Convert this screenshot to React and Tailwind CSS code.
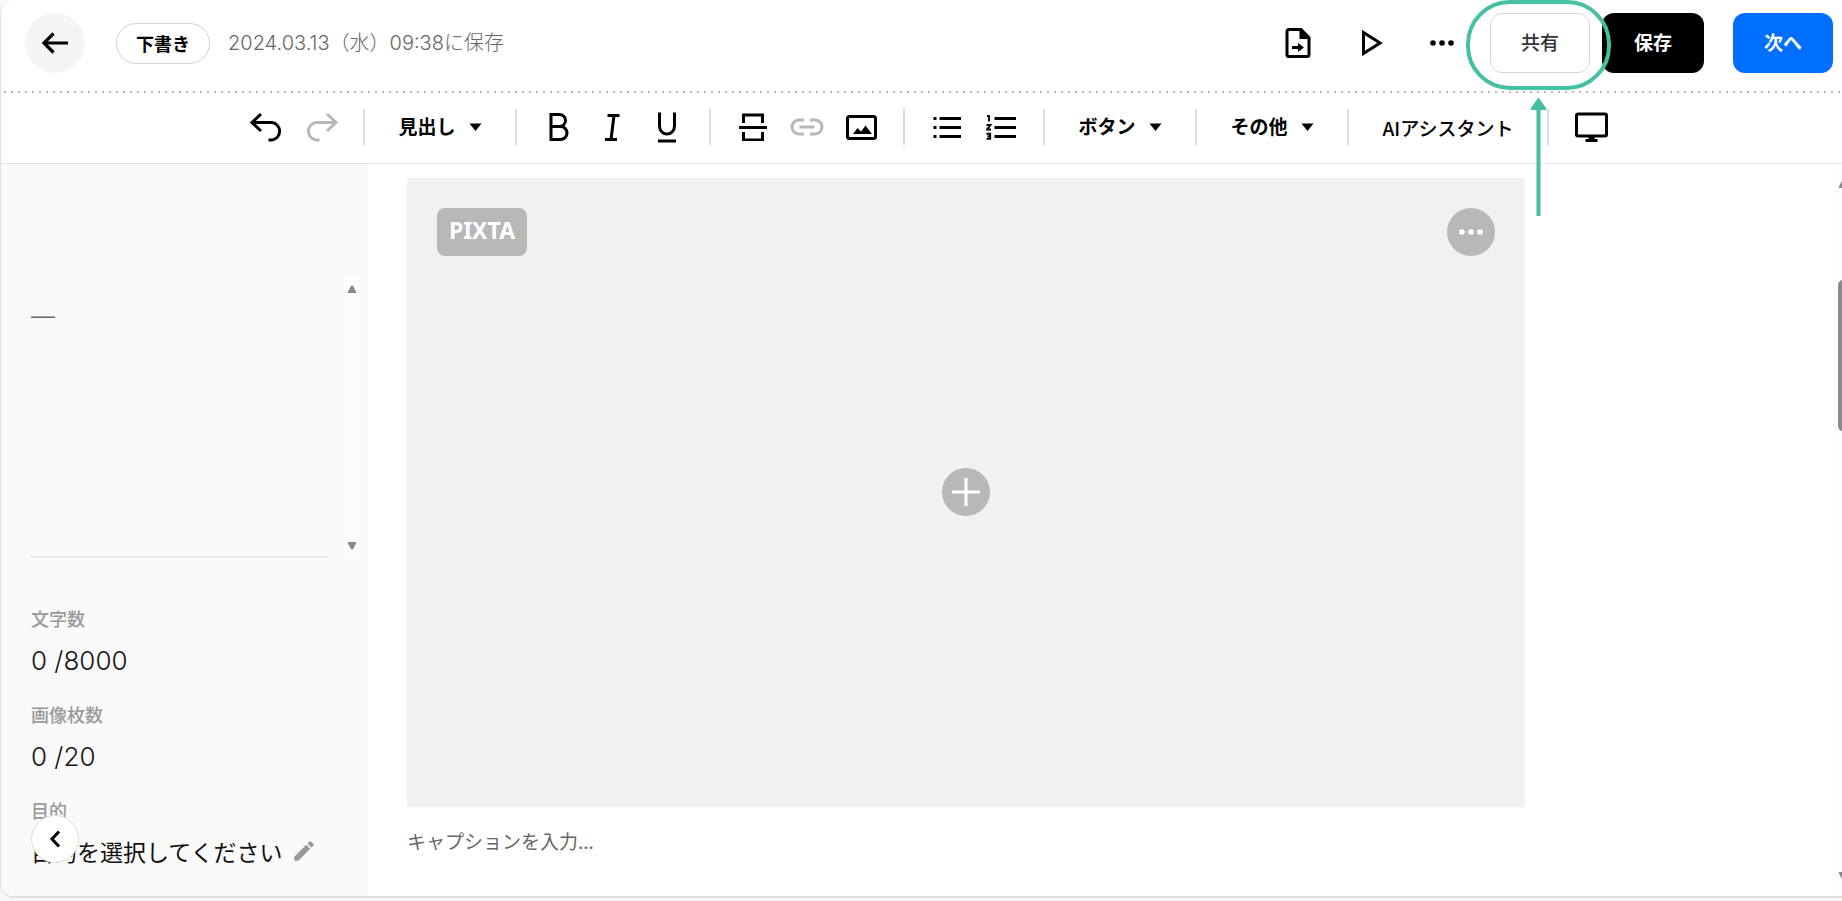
import React from 'react'
import { MdEdit } from 'react-icons/md'

const Icon = ({ w, h, className = '', children }) => (
  <svg
    width={w}
    height={h}
    viewBox={`0 0 ${w} ${h}`}
    fill="none"
    stroke="currentColor"
    strokeWidth="3"
    className={`shrink-0 ${className}`}
    aria-hidden="true"
  >
    {children}
  </svg>
)

const BackIcon = () => (
  <Icon w={28} h={22}>
    <path d="M27 11H3M12.5 1.5L3 11l9.5 9.5" strokeWidth="3.2" />
  </Icon>
)

const UndoIcon = ({ className }) => (
  <Icon w={34} h={30} className={className}>
    <path d="M11 2L2 10.500l9 8.500M2 10.500h20a8.500 8.800 0 0 1 0 17.500h-3.500" />
  </Icon>
)

const BoldIcon = () => (
  <Icon w={20} h={30}>
    <path d="M2 2.500h8.500a5.700 5.700 0 0 1 0 12H2zM2 14.500h9.500a6.300 6.300 0 0 1 0 13H2z" />
  </Icon>
)

const ItalicIcon = () => (
  <Icon w={18} h={30}>
    <path d="M3.500 3.500h12M1 27.500h12M10 3.500L7 27.500" />
  </Icon>
)

const UnderlineIcon = () => (
  <Icon w={20} h={32}>
    <path d="M2.500 1.500v13.500a7.500 8 0 0 0 15 0V1.500M1 30h18" />
  </Icon>
)

const SeparatorIcon = () => (
  <Icon w={28} h={28}>
    <path d="M4.500 10V2h19v8M0 14.500h28M4.500 19v8h19v-8" />
  </Icon>
)

const LinkIcon = () => (
  <Icon w={34} h={18} className="text-[#b8b8b8]">
    <path d="M14 2H9a7 7 0 0 0 0 14h5M20 2h5a7 7 0 0 1 0 14h-5M9.500 9h15" />
  </Icon>
)

const ImageIcon = () => (
  <Icon w={32} h={28}>
    <rect x="2.500" y="3.500" width="28" height="22" rx="2" />
    <path d="M8 21l4.500-6 3.500 3.500 4.500-6L27 21z" fill="currentColor" stroke="none" />
  </Icon>
)

const BulletListIcon = () => (
  <Icon w={28} h={24}>
    <path d="M6.500 3.500H28M6.500 12.500H28M6.500 21.500H28" />
    <path d="M0.500 3.500h3M0.500 12.500h3M0.500 21.500h3" />
  </Icon>
)

const NumberListIcon = () => (
  <Icon w={30} h={26}>
    <path d="M8.500 4.500H30M8.500 13.500H30M8.500 22.500H30" />
    <path
      d="M1 2h2v5.500M0.500 11h4l-3.500 4.500h4M0.500 19.800h3.700v5H0.500M1.500 22.300h2.500"
      strokeWidth="1.900"
    />
  </Icon>
)

const MonitorIcon = () => (
  <Icon w={34} h={30}>
    <rect x="2.500" y="2" width="30" height="22" rx="1.500" />
    <path d="M17.500 24v4" strokeWidth="6" />
    <path d="M11.500 28.500h12" />
  </Icon>
)

const FileIcon = () => (
  <Icon w={26} h={30}>
    <path d="M2 3.500a2 2 0 0 1 2-2h12l8 8v17a2 2 0 0 1-2 2H4a2 2 0 0 1-2-2z" />
    <path d="M14.500 1v10H25z" fill="currentColor" stroke="none" />
    <path d="M7 19.500h8" />
    <path d="M13 15l6 4.500-6 4.500z" fill="currentColor" stroke="none" />
  </Icon>
)

const PlayIcon = () => (
  <Icon w={22} h={28}>
    <path d="M2.500 3.500v21L19 14z" />
  </Icon>
)

const DotsIcon = () => (
  <Icon w={26} h={8}>
    <g fill="currentColor" stroke="none">
      <circle cx="4" cy="4" r="2.800" />
      <circle cx="13" cy="4" r="2.800" />
      <circle cx="22" cy="4" r="2.800" />
    </g>
  </Icon>
)

const Triangle = ({ down, className }) => (
  <svg width="10" height="8" viewBox="0 0 10 8" className={`shrink-0 ${className}`} aria-hidden="true">
    <path
      d={down ? 'M1 0.500h8L5.600 7h-1.200z' : 'M1 7.500h8L5.600 1h-1.200z'}
      fill="currentColor"
      stroke="currentColor"
      strokeLinejoin="round"
    />
  </svg>
)

const Divider = () => <div className="h-9 w-0.5 shrink-0 bg-[#dcdcdc]" />

const ToolGroup = ({ items }) => (
  <div className="flex px-[15px]">
    {items.map(([label, icon]) => (
      <button key={label} type="button" aria-label={label} className="flex h-9 w-[54px] items-center justify-center">
        {icon}
      </button>
    ))}
  </div>
)

const ToolSelect = ({ label }) => (
  <div className="flex w-[150px] items-center justify-center gap-3">
    <select aria-label={label} className="h-9 appearance-none bg-transparent pb-0.5 text-[19px] leading-8 font-bold text-black">
      <option>{label}</option>
    </select>
    <svg width="13" height="8" viewBox="0 0 13 8" aria-hidden="true">
      <path d="M0.500 0.500h12L6.500 8z" />
    </svg>
  </div>
)

const Header = () => (
  <header className="flex items-center pt-[13px] pr-[9px] pb-[18px] pl-6">
    <button type="button" aria-label="戻る" className="flex size-[60px] items-center justify-center rounded-full bg-[#f5f5f5]">
      <BackIcon />
    </button>
    <span className="ml-[31px] flex h-[41px] items-center rounded-full border border-[#d0d0d0] px-[19px] text-lg leading-7 font-bold">
      下書き
    </span>
    <span className="ml-[18px] font-['Inter','Noto_Sans_CJK_JP',sans-serif] text-xl leading-7 font-light text-[#666]">
      2024.03.13（水）09:38に保存
    </span>
    <div className="ml-auto flex items-center">
      <button type="button" aria-label="書き出し">
        <FileIcon />
      </button>
      <button type="button" aria-label="プレビュー" className="ml-[50px]">
        <PlayIcon />
      </button>
      <button type="button" aria-label="メニュー" className="ml-[46px]">
        <DotsIcon />
      </button>
      <div className="relative ml-[35px]">
        <button
          type="button"
          className="h-[60px] w-[100px] rounded-xl border border-[#d4d4d4] pb-0.5 text-[19px] font-medium text-[#333]"
        >
          共有
        </button>
        <Callout />
      </div>
      <button type="button" className="ml-3 h-[60px] w-[102px] rounded-xl bg-black pb-0.5 text-[19px] font-bold text-white">
        保存
      </button>
      <button type="button" className="ml-[29px] h-[60px] w-[100px] rounded-xl bg-[#006fff] pb-0.5 text-[19px] font-bold text-white">
        次へ
      </button>
    </div>
  </header>
)

// highlight ring and arrow over the share button
const Callout = () => (
  <svg
    width="146"
    height="218"
    viewBox="0 0 146 218"
    fill="none"
    className="pointer-events-none absolute -top-[13px] -left-6 z-10 text-[#44c0a3]"
    aria-hidden="true"
  >
    <rect x="2" y="2" width="141" height="86" rx="42" stroke="currentColor" strokeWidth="4" />
    <path d="M72.500 216V106" stroke="currentColor" strokeWidth="4" />
    <path d="M72.500 99l7 10h-14z" fill="currentColor" stroke="currentColor" strokeWidth="2" strokeLinejoin="round" />
  </svg>
)

const Toolbar = () => (
  <div className="flex items-center border-b border-[#e6e6e6] pt-4 pb-[18px] pl-56">
    <ToolGroup
      items={[
        ['元に戻す', <UndoIcon />],
        ['やり直す', <UndoIcon className="-scale-x-100 text-[#b8b8b8]" />],
      ]}
    />
    <Divider />
    <ToolSelect label="見出し" />
    <Divider />
    <ToolGroup
      items={[
        ['太字', <BoldIcon />],
        ['斜体', <ItalicIcon />],
        ['下線', <UnderlineIcon />],
      ]}
    />
    <Divider />
    <ToolGroup
      items={[
        ['区切り線', <SeparatorIcon />],
        ['リンク', <LinkIcon />],
        ['画像', <ImageIcon />],
      ]}
    />
    <Divider />
    <ToolGroup
      items={[
        ['箇条書き', <BulletListIcon />],
        ['番号付きリスト', <NumberListIcon />],
      ]}
    />
    <Divider />
    <ToolSelect label="ボタン" />
    <Divider />
    <ToolSelect label="その他" />
    <Divider />
    <button type="button" className="w-[198px] pt-0.5 text-[19px] leading-8 font-medium">
      AIアシスタント
    </button>
    <Divider />
    <ToolGroup items={[['PC表示', <MonitorIcon />]]} />
  </div>
)

const stats = [
  { label: '文字数', value: '0 /8000' },
  { label: '画像枚数', value: '0 /20' },
]

const Sidebar = () => (
  <aside className="relative w-[367px] shrink-0 bg-[#fafafa] pt-[113px] pr-[9px] pb-[25px] pl-[30px]">
    <div className="flex h-[281px] justify-between">
      <div className="w-[298px] border-b-2 border-[#ebebeb] pt-[22px] font-['Liberation_Sans',sans-serif] text-2xl leading-8 text-[#666]">
        —
      </div>
      <div className="flex w-[15px] flex-col items-center justify-between bg-[#fcfcfc] py-2 text-[#8a8a8a]">
        <Triangle />
        <Triangle down />
      </div>
    </div>
    <dl className="mt-[46px] space-y-[23px]">
      {stats.map((s) => (
        <div key={s.label}>
          <dt className="text-lg leading-7 font-medium text-[#999]">{s.label}</dt>
          <dd className="mt-[9px] h-9 pt-0.5 font-['Inter','Noto_Sans_CJK_JP',sans-serif] text-[26px] leading-9 font-light text-[#111]">
            {s.value}
          </dd>
        </div>
      ))}
      <div>
        <dt className="text-lg leading-7 font-medium text-[#999]">目的</dt>
        <dd className="mt-[9px] flex items-center gap-2 text-[23px] leading-9 text-[#111]">
          目的を選択してください
          <button type="button" aria-label="目的を編集" className="text-[#999]">
            <MdEdit size={26} />
          </button>
        </dd>
      </div>
    </dl>
    <button
      type="button"
      aria-label="サイドバーを閉じる"
      className="absolute bottom-[33px] left-[30px] flex size-12 items-center justify-center rounded-full border border-[#ddd] bg-white"
    >
      <Icon w={12} h={18}>
        <path d="M10 1.500L3 9l7 7.500" />
      </Icon>
    </button>
  </aside>
)

const Editor = () => (
  <main className="flex-1 pt-3.5 pr-[309px] pl-[39px]">
    <div className="flex aspect-video flex-col bg-[#f1f1f1] p-[30px]">
      <div className="flex items-start justify-between">
        <button
          type="button"
          className="h-12 w-[90px] rounded-lg bg-[#b8b8b8] pb-1 font-['Noto_Sans',sans-serif] text-[23px] leading-8 font-bold text-white"
        >
          PIXTA
        </button>
        <button type="button" aria-label="メニュー" className="flex size-12 items-center justify-center rounded-full bg-[#b8b8b8] text-white">
          <DotsIcon />
        </button>
      </div>
      <div className="flex flex-1 items-center justify-center pb-12">
        <button type="button" aria-label="画像を追加" className="flex size-12 items-center justify-center rounded-full bg-[#b8b8b8] text-white">
          <Icon w={28} h={28}>
            <path d="M14 0v28M0 14h28" />
          </Icon>
        </button>
      </div>
    </div>
    <input
      type="text"
      aria-label="キャプション"
      placeholder="キャプションを入力..."
      className="mt-5 h-7 w-full text-[19px] leading-7 placeholder:text-[#666]"
    />
  </main>
)

const Scrollbar = () => (
  <div className="flex w-2 shrink-0 flex-col overflow-hidden bg-[#fcfcfc] pt-4 pb-4 pl-1 text-[#8a8a8a]">
    <Triangle />
    <div className="mt-[92px] h-[151px] w-2.5 rounded-full bg-[#8a8a8a]" />
    <Triangle down className="mt-auto" />
  </div>
)

export default function App() {
  return (
    <div className="flex min-h-screen flex-col bg-[#f7f7f7] pb-[3px] font-['Noto_Sans_CJK_JP',sans-serif] text-black">
      <div className="flex flex-1 flex-col overflow-hidden rounded-l-[14px] border-b-2 border-l border-[#e0e0e0] bg-white">
        <Header />
        <div className="h-0.5 bg-[linear-gradient(90deg,#b8b8b8_2px,transparent_2px)] bg-[length:7px_2px] bg-[position:3px_0]" />
        <Toolbar />
        <div className="flex flex-1">
          <Sidebar />
          <Editor />
          <Scrollbar />
        </div>
      </div>
    </div>
  )
}
